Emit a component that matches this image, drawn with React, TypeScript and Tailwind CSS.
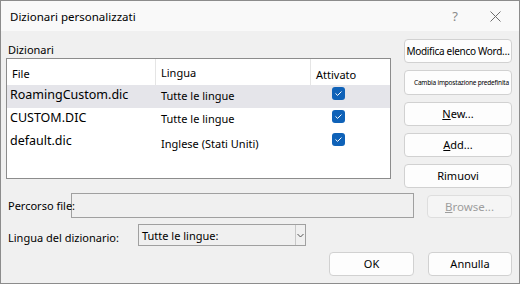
import React from "react";

const font = { fontFamily: '"Noto Sans", "Liberation Sans", sans-serif' };

function Check() {
  return (
    <div className="w-[13px] h-[13px] rounded-[3px] bg-[#0f62b8] flex items-center justify-center">
      <svg width="9" height="9" viewBox="0 0 9 9">
        <path d="M1.8 4.7 L3.6 6.4 L7.2 2.8" fill="none" stroke="white" strokeWidth="1" strokeLinecap="round" strokeLinejoin="round" />
      </svg>
    </div>
  );
}

function Btn({ children, className = "", disabled = false }: { children: React.ReactNode; className?: string; disabled?: boolean }) {
  return (
    <div
      className={
        "flex items-center justify-center rounded-[4px] border whitespace-nowrap " +
        (disabled ? "border-[#dedede] bg-[#f5f5f5] text-[#9d9d9d] " : "border-[#d1d1d1] bg-[#fdfdfd] text-black ") +
        className
      }
    >
      {children}
    </div>
  );
}

const rows = [
  { file: "RoamingCustom.dic", lang: "Tutte le lingue", sel: true, lt: "mt-[3px]" },
  { file: "CUSTOM.DIC", lang: "Tutte le lingue", sel: false, lt: "mt-[3px]" },
  { file: "default.dic", lang: "Inglese (Stati Uniti)", sel: false, lt: "mt-[5px]" },
];

export default function App() {
  return (
    <div style={font} className="w-[520px] h-[284px] border border-[#8c8c8c] bg-[#f0f0f0] flex flex-col text-black overflow-hidden whitespace-nowrap">
      <div className="h-[30px] bg-[#f9f9f9] flex items-center pl-[9px] shrink-0">
        <div className="text-[11.5px] leading-none flex-1 pt-[2px]">Dizionari personalizzati</div>
        <div className="text-[13px] leading-none text-[#8a8a8a] mr-[32px] pt-[1px]">?</div>
        <svg width="11" height="11" viewBox="0 0 11 11" className="mr-[18px]">
          <path d="M0.5 0.5 L10.5 10.5 M10.5 0.5 L0.5 10.5" stroke="#6e6e6e" strokeWidth="1" />
        </svg>
      </div>
      <div className="flex px-[5px] pt-[8px]">
        <div className="w-[385px] flex flex-col">
          <div className="text-[11px] leading-[16px] h-[19px] pl-[2px] pt-[3px]">Dizionari</div>
          <div className="h-[121px] border border-[#8c8c8c] bg-white flex flex-col">
            <div className="h-[26px] flex text-[11px] shrink-0">
              <div className="w-[149px] pl-[5px] pt-[9px] leading-none border-r border-[#e5e5e5]">File</div>
              <div className="w-[155px] pl-[5px] pt-[8px] leading-none border-r border-[#e5e5e5]">Lingua</div>
              <div className="flex-1 pl-[5px] pt-[10px] leading-none">Attivato</div>
            </div>
            {rows.map((r, i) => (
              <div key={i} className={"h-[23px] flex " + (r.sel ? "bg-[#e5e5ea]" : "")}>
                <div className="w-[149px] pl-[3px] text-[12.5px] leading-[18px] pt-[1px]">{r.file}</div>
                <div className={"w-[155px] pl-[5px] text-[11px] leading-[16px] " + r.lt}>{r.lang}</div>
                <div className="flex-1 pl-[21px] pt-[2px]">
                  <Check />
                </div>
              </div>
            ))}
          </div>
        </div>
        <div className="ml-[13px] w-[108px] flex flex-col text-[11px]">
          <Btn className="h-[24px] text-[10px] tracking-[-0.3px]">Modifica elenco Word…</Btn>
          <Btn className="h-[25px] mt-[7px] text-[6.5px] tracking-[-0.2px] justify-start pl-[9px] overflow-hidden">Cambia impostazione predefinita</Btn>
          <Btn className="h-[24px] mt-[7px]"><span><span className="underline">N</span>ew...</span></Btn>
          <Btn className="h-[24px] mt-[7px]"><span><span className="underline">A</span>dd...</span></Btn>
          <Btn className="h-[24px] mt-[7px]">Rimuovi</Btn>
        </div>
      </div>
      <div className="flex items-start mt-[5px] pl-[7px] text-[11px]">
        <div className="w-[63px] pt-[7px] leading-none relative z-10">Percorso file:</div>
        <div className="w-[343px] h-[25px] border border-[#a0a0a0] bg-[#f0f0f0]"></div>
        <Btn disabled className="ml-[13px] mt-[2px] w-[85px] h-[23px] text-[11.5px]"><span><span className="underline">B</span>rowse...</span></Btn>
      </div>
      <div className="flex items-start mt-[6px] pl-[7px] text-[11px]">
        <div className="w-[130px] pt-[8px] leading-none">Lingua del dizionario:</div>
        <div className="w-[168px] h-[22px] border border-[#a0a0a0] bg-[#f0f0f0] flex items-center">
          <div className="flex-1 pl-[3px] leading-none">Tutte le lingue:</div>
          <div className="w-[10px] h-full border-l border-[#c8c8c8] flex items-center justify-center">
            <svg width="7" height="5" viewBox="0 0 7 5">
              <path d="M0.5 1 L3.5 4 L6.5 1" fill="none" stroke="#555" strokeWidth="1" />
            </svg>
          </div>
        </div>
      </div>
      <div className="flex justify-end mt-[6px] pr-[7px] text-[11px]">
        <Btn className="w-[85px] h-[24px]">OK</Btn>
        <Btn className="w-[84px] h-[24px] ml-[14px]">Annulla</Btn>
      </div>
    </div>
  );
}
